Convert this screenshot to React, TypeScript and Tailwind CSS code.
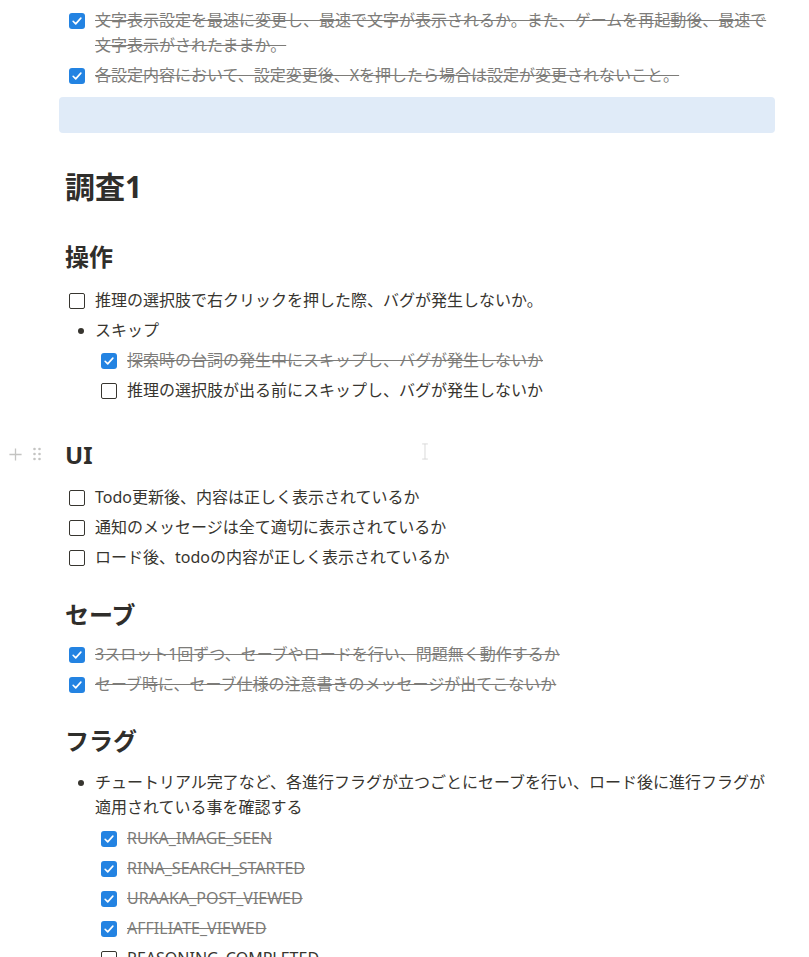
import type React from "react";

type Todo = { text: string; done?: boolean };

const Check: React.FC<{ done?: boolean }> = ({ done }) =>
  done ? (
    <span className="mt-[5px] flex h-4 w-4 shrink-0 items-center justify-center rounded-[3px] bg-[#2383e2]">
      <svg viewBox="0 0 14 14" className="h-3 w-3" fill="none">
        <path d="M2.5 7.3l3 3 6-6.6" stroke="#fff" strokeWidth="1.9" strokeLinecap="round" strokeLinejoin="round" />
      </svg>
    </span>
  ) : (
    <span className="mt-[5px] h-4 w-4 shrink-0 rounded-[2px] border-[1.5px] border-[#37352f]" />
  );

const TodoRow: React.FC<Todo & { nested?: boolean }> = ({ text, done, nested }) => (
  <div className={`flex py-[2.5px] ${nested ? "pl-9" : "pl-1"}`}>
    <div className="flex w-[26px] shrink-0">
      <Check done={done} />
    </div>
    <div
      className={
        done
          ? "leading-[25px] text-[#7d7c79] line-through decoration-[#7d7c79]"
          : "leading-[25px] text-[#37352f]"
      }
    >
      {text}
    </div>
  </div>
);

const Bullet: React.FC<{ text: string }> = ({ text }) => (
  <div className="flex py-[2.5px] pl-1">
    <div className="flex w-[26px] shrink-0 justify-center pr-[2px]">
      <span className="mt-[10px] h-[6px] w-[6px] rounded-full bg-[#37352f]" />
    </div>
    <div className="leading-[25px] text-[#37352f]">{text}</div>
  </div>
);

const H2: React.FC<{ children: React.ReactNode; className?: string }> = ({ children, className }) => (
  <h2 className={`relative text-[24px] font-bold leading-[31px] text-[#2f2e2b] ${className ?? ""}`}>{children}</h2>
);

export default function App() {
  return (
    <div
      className="relative min-h-[957px] w-[809px] overflow-hidden bg-white text-[16px]"
      style={{ fontFamily: '"Noto Sans", "Noto Sans CJK JP", sans-serif' }}
    >
      <div className="ml-[65px] w-[710px] pt-[5px]">
        <TodoRow done text="文字表示設定を最速に変更し、最速で文字が表示されるか。また、ゲームを再起動後、最速で文字表示がされたままか。" />
        <TodoRow done text="各設定内容において、設定変更後、Xを押したら場合は設定が変更されないこと。" />

        <div className="-ml-[6px] mt-[7px] h-[36px] w-[716px] rounded-[4px] bg-[#e0ebf8]" />

        <h1 className="mt-[34px] text-[30px] font-bold leading-[39px] text-[#2f2e2b]">調査1</h1>

        <H2 className="mt-[35px]">操作</H2>
        <div className="mt-[13px]">
          <TodoRow text="推理の選択肢で右クリックを押した際、バグが発生しないか。" />
          <Bullet text="スキップ" />
          <TodoRow nested done text="探索時の台詞の発生中にスキップし、バグが発生しないか" />
          <TodoRow nested text="推理の選択肢が出る前にスキップし、バグが発生しないか" />
        </div>

        <H2 className="mt-[34px]">
          <span className="absolute -left-[57px] top-[7px] flex items-center gap-[9px]">
            <svg viewBox="0 0 16 16" className="h-[15px] w-[15px]" fill="none">
              <path d="M8 1.5v13M1.5 8h13" stroke="#c4c4c2" strokeWidth="1.4" />
            </svg>
            <svg viewBox="0 0 10 16" className="h-[16px] w-[10px]" fill="#c4c4c2">
              <circle cx="2.5" cy="3" r="1.3" />
              <circle cx="7.5" cy="3" r="1.3" />
              <circle cx="2.5" cy="8" r="1.3" />
              <circle cx="7.5" cy="8" r="1.3" />
              <circle cx="2.5" cy="13" r="1.3" />
              <circle cx="7.5" cy="13" r="1.3" />
            </svg>
          </span>
          UI
        </H2>
        <div className="mt-[12px]">
          <TodoRow text="Todo更新後、内容は正しく表示されているか" />
          <TodoRow text="通知のメッセージは全て適切に表示されているか" />
          <TodoRow text="ロード後、todoの内容が正しく表示されているか" />
        </div>

        <H2 className="mt-[27px]">セーブ</H2>
        <div className="mt-[9px]">
          <TodoRow done text="3スロット1回ずつ、セーブやロードを行い、問題無く動作するか" />
          <TodoRow done text="セーブ時に、セーブ仕様の注意書きのメッセージが出てこないか" />
        </div>

        <H2 className="mt-[26px]">フラグ</H2>
        <div className="mt-[11px]">
          <Bullet text="チュートリアル完了など、各進行フラグが立つごとにセーブを行い、ロード後に進行フラグが適用されている事を確認する" />
          <div className="pt-[1px]">
            <TodoRow nested done text="RUKA_IMAGE_SEEN" />
            <TodoRow nested done text="RINA_SEARCH_STARTED" />
            <TodoRow nested done text="URAAKA_POST_VIEWED" />
            <TodoRow nested done text="AFFILIATE_VIEWED" />
            <TodoRow nested text="REASONING_COMPLETED" />
          </div>
        </div>
      </div>

      <svg viewBox="0 0 8 18" className="absolute left-[421px] top-[443px] h-[17px] w-[8px]" fill="none">
        <path d="M1 1h6M1 17h6M4 1v16" stroke="#d8d8d8" strokeWidth="1" />
      </svg>
    </div>
  );
}
